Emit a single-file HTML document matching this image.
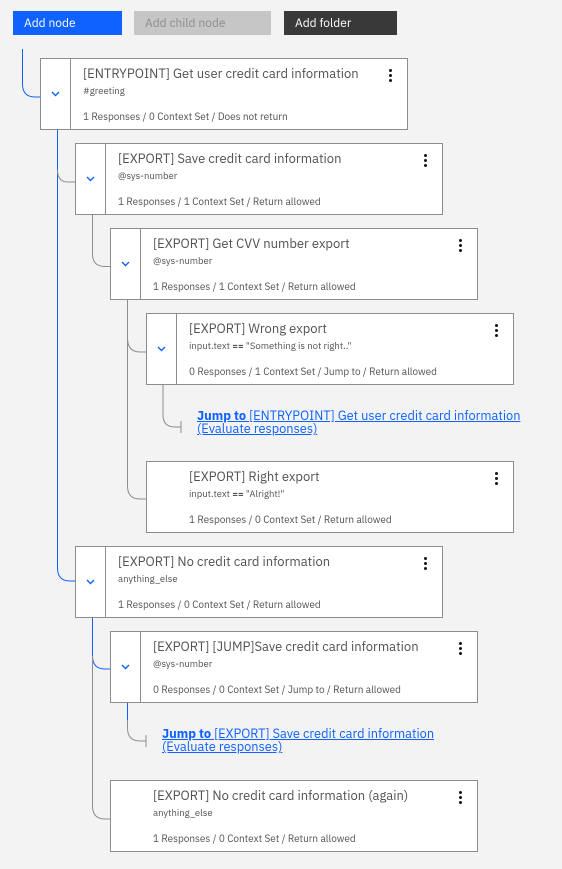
<!DOCTYPE html>
<html><head><meta charset="utf-8"><style>
body{margin:0;width:562px;height:869px;background:#f3f3f3;font-family:"IBM Plex Sans","Liberation Sans",sans-serif;position:relative;overflow:hidden}
.btn{position:absolute;top:11px;height:24px;font-size:12px;line-height:25px;padding-left:11px;box-sizing:border-box}
.card{position:absolute;width:368px;height:72px;background:#fff;border:1px solid #8d8d8d;box-sizing:border-box}
.chev{position:absolute;left:0;top:0;bottom:0;width:29px;border-right:1px solid #8d8d8d}
.chev svg{position:absolute;left:10px;top:32px}
.t{position:absolute;left:42px;top:6px;font-size:13px;color:#525252;white-space:nowrap}
.s{position:absolute;left:42px;top:25px;font-size:9.5px;color:#525252;white-space:nowrap}
.f{position:absolute;left:42px;top:51px;font-size:10px;color:#525252;white-space:nowrap}
.k{position:absolute;right:15px;top:10px;width:3px}
.k i{display:block;width:3px;height:3px;border-radius:50%;background:#161616;margin-bottom:2px}
.j{position:absolute;font-size:12.8px;line-height:13px;color:#0f62fe;text-decoration:underline;white-space:nowrap}
svg.l{position:absolute;left:0;top:0}
</style></head><body>
<div class="btn" style="left:13px;width:109px;background:#0f62fe;color:#fff">Add node</div>
<div class="btn" style="left:134px;width:137px;background:#c6c6c6;color:#8d8d8d">Add child node</div>
<div class="btn" style="left:284px;width:113px;background:#393939;color:#fff">Add folder</div>
<svg class="l" width="562" height="869" fill="none" stroke-width="1">
<path d="M22.5 49 V84 Q22.5 97 35 97 H40" stroke="#0f62fe"/>
<path d="M57.5 129 V568 Q57.5 581 70 581 H75" stroke="#0f62fe"/>
<path d="M57.5 170 Q57.5 182 68 182 H75" stroke="#8d8d8d"/>
<path d="M92.5 214 V254 Q92.5 266.5 105 266.5 H110" stroke="#8d8d8d"/>
<path d="M127.5 299 V338 Q127.5 352 140 352 H146 M127.5 338 V486 Q127.5 499 140 499 H146" stroke="#8d8d8d"/>
<path d="M163 384 V415 Q163 427 175 427 H181 M181 421 V433" stroke="#8d8d8d"/>
<path d="M92.5 617 V656 Q92.5 669 105 669 H110" stroke="#0f62fe"/>
<path d="M92.5 656 V806 Q92.5 819 105 819 H110" stroke="#8d8d8d"/>
<path d="M127.5 702 V720" stroke="#0f62fe"/>
<path d="M127.5 720 V728 Q127.5 741 140 741 H146 M146 735 V747" stroke="#8d8d8d"/>
</svg>

<div class="card" style="left:40px;top:58px"><div class="chev"><svg width="9" height="6"><path d="M1 1 L4.5 4.5 L8 1" stroke="#0f62fe" stroke-width="1.4" fill="none"/></svg></div><div class="t">[ENTRYPOINT] Get user credit card information</div><div class="s">#greeting</div><div class="f">1 Responses / 0 Context Set / Does not return</div><div class="k"><i></i><i></i><i></i></div></div>

<div class="card" style="left:75px;top:143px"><div class="chev"><svg width="9" height="6"><path d="M1 1 L4.5 4.5 L8 1" stroke="#0f62fe" stroke-width="1.4" fill="none"/></svg></div><div class="t">[EXPORT] Save credit card information</div><div class="s">@sys-number</div><div class="f">1 Responses / 1 Context Set / Return allowed</div><div class="k"><i></i><i></i><i></i></div></div>

<div class="card" style="left:110px;top:228px"><div class="chev"><svg width="9" height="6"><path d="M1 1 L4.5 4.5 L8 1" stroke="#0f62fe" stroke-width="1.4" fill="none"/></svg></div><div class="t">[EXPORT] Get CVV number export</div><div class="s">@sys-number</div><div class="f">1 Responses / 1 Context Set / Return allowed</div><div class="k"><i></i><i></i><i></i></div></div>

<div class="card" style="left:146px;top:313px"><div class="chev"><svg width="9" height="6"><path d="M1 1 L4.5 4.5 L8 1" stroke="#0f62fe" stroke-width="1.4" fill="none"/></svg></div><div class="t">[EXPORT] Wrong export</div><div class="s">input.text <b>==</b> "Something is not right.."</div><div class="f">0 Responses / 1 Context Set / Jump to / Return allowed</div><div class="k"><i></i><i></i><i></i></div></div>

<div class="j" style="left:197px;top:409px"><b>Jump to </b>[ENTRYPOINT] Get user credit card information<br>(Evaluate responses)</div>

<div class="card" style="left:146px;top:461px"><div class="t">[EXPORT] Right export</div><div class="s">input.text <b>==</b> "Alright!"</div><div class="f">1 Responses / 0 Context Set / Return allowed</div><div class="k"><i></i><i></i><i></i></div></div>

<div class="card" style="left:75px;top:546px"><div class="chev"><svg width="9" height="6"><path d="M1 1 L4.5 4.5 L8 1" stroke="#0f62fe" stroke-width="1.4" fill="none"/></svg></div><div class="t">[EXPORT] No credit card information</div><div class="s">anything_else</div><div class="f">1 Responses / 0 Context Set / Return allowed</div><div class="k"><i></i><i></i><i></i></div></div>

<div class="card" style="left:110px;top:631px"><div class="chev"><svg width="9" height="6"><path d="M1 1 L4.5 4.5 L8 1" stroke="#0f62fe" stroke-width="1.4" fill="none"/></svg></div><div class="t">[EXPORT] [JUMP]Save credit card information</div><div class="s">@sys-number</div><div class="f">0 Responses / 0 Context Set / Jump to / Return allowed</div><div class="k"><i></i><i></i><i></i></div></div>

<div class="j" style="left:162px;top:727px"><b>Jump to </b>[EXPORT] Save credit card information<br>(Evaluate responses)</div>

<div class="card" style="left:110px;top:780px"><div class="t">[EXPORT] No credit card information (again)</div><div class="s">anything_else</div><div class="f">1 Responses / 0 Context Set / Return allowed</div><div class="k"><i></i><i></i><i></i></div></div>
</body></html>
